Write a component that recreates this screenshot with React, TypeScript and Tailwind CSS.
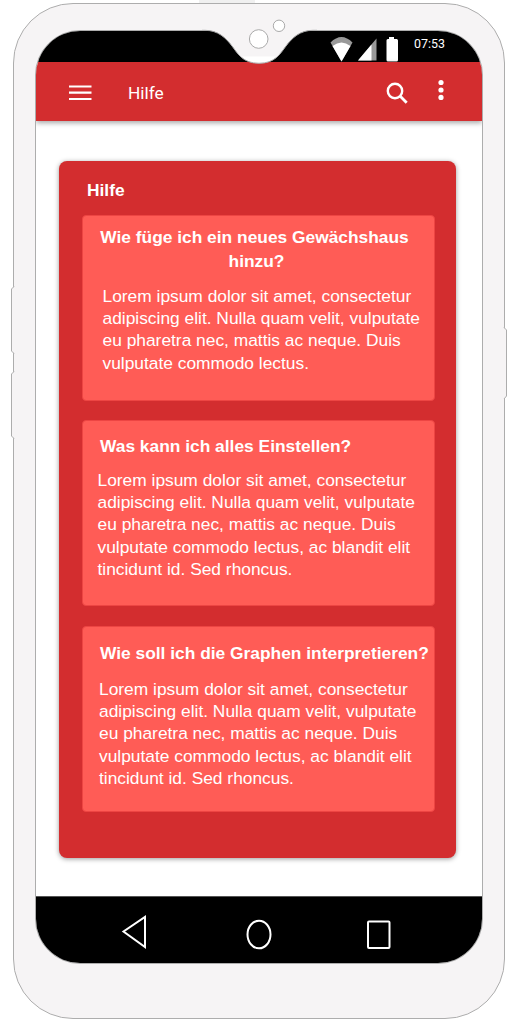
import React from "react";

type Faq = {
  title: string[];
  body: string[];
  cardClass: string;
  titleClass: string;
  bodyClass: string;
};

const faqs: Faq[] = [
  {
    title: ["Wie füge ich ein neues Gewächshaus", "hinzu?"],
    body: [
      "Lorem ipsum dolor sit amet, consectetur",
      "adipiscing elit. Nulla quam velit, vulputate",
      "eu pharetra nec, mattis ac neque. Duis",
      "vulputate commodo lectus.",
    ],
    cardClass: "h-[186px] pt-[9px]",
    titleClass: "w-[309px] text-center [&>span:last-child]:pl-1",
    bodyClass: "ml-[19.5px] mt-[12.4px]",
  },
  {
    title: ["Was kann ich alles Einstellen?"],
    body: [
      "Lorem ipsum dolor sit amet, consectetur",
      "adipiscing elit. Nulla quam velit, vulputate",
      "eu pharetra nec, mattis ac neque. Duis",
      "vulputate commodo lectus, ac blandit elit",
      "tincidunt id. Sed rhoncus.",
    ],
    cardClass: "mt-[19px] h-[186px] pt-[13px]",
    titleClass: "",
    bodyClass: "ml-[14.5px] mt-[11.4px]",
  },
  {
    title: ["Wie soll ich die Graphen interpretieren?"],
    body: [
      "Lorem ipsum dolor sit amet, consectetur",
      "adipiscing elit. Nulla quam velit, vulputate",
      "eu pharetra nec, mattis ac neque. Duis",
      "vulputate commodo lectus, ac blandit elit",
      "tincidunt id. Sed rhoncus.",
    ],
    cardClass: "mt-[20px] h-[186px] pt-[14px]",
    titleClass: "",
    bodyClass: "ml-[16px] mt-[13.4px]",
  },
];

function StatusBar() {
  return (
    <div className="flex h-[31px] shrink-0 bg-black pl-[294px]">
      <svg className="mt-[5px] h-[27px] w-[72px] shrink-0" viewBox="0 0 72 27">
        <path d="M0.5 6.5 Q11.5 -4.5 22.5 6.5 L11.5 25.5Z" fill="#999" />
        <path d="M2.5 10 Q11.5 2.8 20.5 10 L11.5 25.5Z" fill="#fff" />
        <path d="M46.5 2.5V24.5H28Z" fill="#999" />
        <path d="M41.5 8.5V24.5H28Z" fill="#fff" />
        <path d="M59 1h5v2h2.6q1.4 0 1.4 1.5V24q0 1.5-1.5 1.5h-8.5q-1.5 0-1.5-1.5V4.5q0-1.5 1.4-1.5H59z" fill="#fff" />
      </svg>
      <span className="ml-[12.5px] mt-[5px] font-['Roboto',sans-serif] text-[12.4px] leading-[16px] text-white">
        07:53
      </span>
    </div>
  );
}

function AppBar() {
  return (
    <header className="relative flex h-[59px] shrink-0 bg-[#d32d2f] text-white shadow-[0_2px_5px_rgba(0,0,0,0.35)]">
      <svg className="ml-[33px] mt-[23px] h-[16px] w-[23px]" viewBox="0 0 23 16">
        <path d="M0 1.5H22.5M0 7.7H22.5M0 14H22.5" stroke="#fff" strokeWidth="2.2" />
      </svg>
      <h1 className="ml-[36.5px] mt-[19px] w-[60px] font-['Roboto',sans-serif] text-[17.3px] leading-[24px]">
        Hilfe
      </h1>
      <svg className="ml-[197.5px] mt-[20px] h-[23px] w-[23px]" viewBox="0 0 23 23" fill="none" stroke="#fff">
        <circle cx="9" cy="9" r="7.2" strokeWidth="2.4" />
        <path d="M14 14L20.7 20.7" strokeWidth="2.8" />
      </svg>
      <svg className="ml-[29.5px] mt-[17px] h-[22px] w-[6px]" viewBox="0 0 6 22" fill="#fff">
        <circle cx="3" cy="3.5" r="2.6" />
        <circle cx="3" cy="11" r="2.6" />
        <circle cx="3" cy="18.4" r="2.6" />
      </svg>
    </header>
  );
}

function FaqCard({ faq }: { faq: Faq }) {
  return (
    <section
      className={`w-[353px] rounded-[4px] border border-[#ed4543] bg-[#ff5c56] whitespace-nowrap ${faq.cardClass}`}
    >
      <h3 className={`ml-[17px] text-[17.37px] leading-[24px] font-bold ${faq.titleClass}`}>
        {faq.title.map((line) => (
          <span key={line} className="block">{line}</span>
        ))}
      </h3>
      <p className={`text-[17.37px] leading-[22.3px] ${faq.bodyClass}`}>
        {faq.body.map((line) => (
          <span key={line} className="block">{line}</span>
        ))}
      </p>
    </section>
  );
}

function NavBar() {
  return (
    <nav className="h-[67px] shrink-0 border-t border-[#555] bg-black">
      <svg className="h-[66px] w-[445px]" viewBox="0 0 445 66" fill="none" stroke="#fff" strokeWidth="2">
        <path d="M109 20V50L87.5 34.5Z" />
        <ellipse cx="223" cy="37.5" rx="11.5" ry="13.8" />
        <rect x="332" y="24.5" width="21.5" height="26.5" rx="1" />
      </svg>
    </nav>
  );
}

function Notch() {
  return (
    <svg className="absolute left-[195px] top-[15px] h-[52px] w-[128px]" viewBox="195 15 128 52">
      <path
        d="M200 30 H205 C218 30 226 38 232 46 C238 54 243 63.3 259 63.3 C275 63.3 280 54 286 46 C292 38 300 30 313 30 H318 V28 H200Z"
        fill="#f6f4f5"
      />
      <path d="M242 56.5 H276 Q269 63.3 259 63.3 Q249 63.3 242 56.5Z" fill="#fff" />
      <path
        d="M202 30.3 H205 C218 30.3 226 38 232 46 C238 54 243 63.3 259 63.3 C275 63.3 280 54 286 46 C292 38 300 30.3 313 30.3 H317"
        fill="none"
        stroke="#aaa"
      />
      <circle cx="258.7" cy="39" r="9.3" fill="#fff" stroke="#aaa" />
      <circle cx="279" cy="25.8" r="5.7" fill="#fff" stroke="#aaa" />
    </svg>
  );
}

export default function App() {
  return (
    <div className="relative h-[1029px] w-[511px] overflow-hidden bg-white pl-[12.5px] pt-[3px] font-['Liberation_Sans',Arial,sans-serif]">
      <div className="absolute left-[199px] top-0 h-[3px] w-[56px] bg-[#f0f0f0]" />
      <div className="h-[1016px] w-[492px] rounded-[60px] border border-[#adadad] bg-[#f6f4f5] pl-[21px] pt-[26px]">
        <div className="flex h-[934px] w-[448px] flex-col overflow-hidden rounded-[45px] border border-[#adadad] bg-white">
          <StatusBar />
          <AppBar />
          <main className="flex-1 pl-[23.5px] pt-[39.5px]">
            <div className="h-[697px] w-[397px] rounded-[8px] bg-[#d32d2f] pl-[23px] text-white shadow-[0_1px_5px_rgba(0,0,0,0.4)]">
              <h2 className="h-[54px] pl-[5px] pt-[17.5px] text-[17.37px] leading-[24px] font-bold">Hilfe</h2>
              {faqs.map((faq) => (
                <FaqCard key={faq.title[0]} faq={faq} />
              ))}
            </div>
          </main>
          <NavBar />
        </div>
      </div>
      <Notch />
      <svg className="absolute left-[8px] top-[280px] h-[165px] w-[8px]" viewBox="8 280 8 165" fill="#f6f4f5" stroke="#adadad">
        <path d="M14 286.5 L11.5 289 V351 L14 353.5" />
        <path d="M14 371.5 L11.5 374 V436 L14 438.5" />
      </svg>
      <svg className="absolute left-[500px] top-[322px] h-[84px] w-[10px]" viewBox="500 322 10 84" fill="#f6f4f5" stroke="#adadad">
        <path d="M504 327.5 L506.5 330 V396 L504 399" />
      </svg>
    </div>
  );
}
